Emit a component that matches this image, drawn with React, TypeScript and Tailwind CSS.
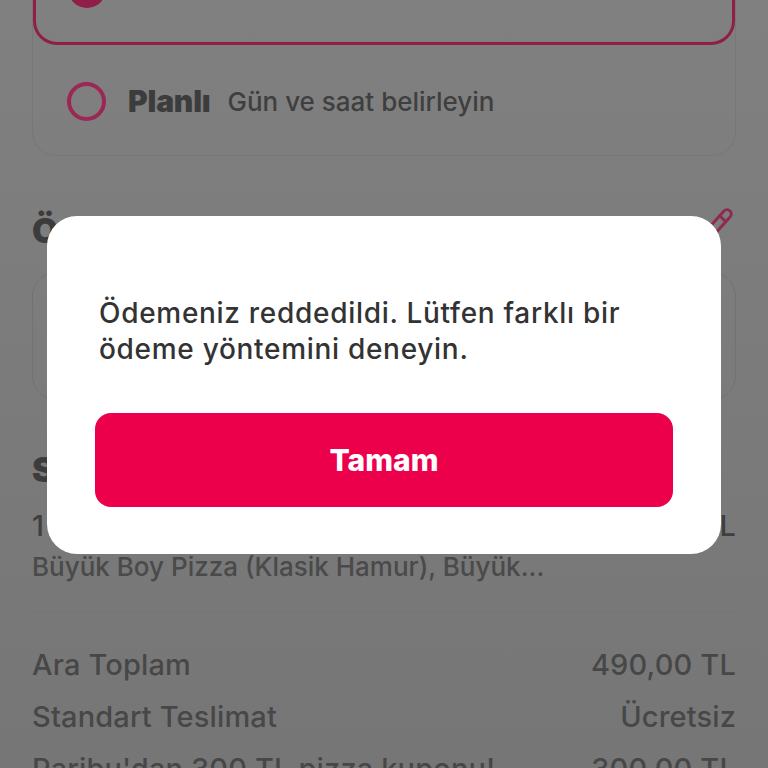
const font = "font-['Inter',sans-serif]";

function Row({ label, value }: { label: string; value: string }) {
  return (
    <div className="flex h-[52px] items-center justify-between text-[29px] font-medium tracking-[0.15px] text-[#474747]">
      <span>{label}</span>
      <span>{value}</span>
    </div>
  );
}

export default function App() {
  return (
    <div className={`relative h-[768px] w-[768px] overflow-hidden bg-gradient-to-b from-[#808080] to-[#767676] ${font}`}>
      <div className="mt-[-60px] px-8">
        <div className="rounded-[24px] border border-[#777777]">
          <div className="relative z-10 flex h-[104px] items-start rounded-[24px] border-[3px] border-[#8f1f49] px-[32px]">
            <div className="mt-[26px] h-[38px] w-[38px] rounded-full bg-[#8f1f49]" />
          </div>
          <div className="flex h-[110px] items-center px-[34px] pt-[2px]">
            <div className="h-[39px] w-[39px] rounded-full border-[4px] border-[#9c2654]" />
            <span className="ml-[22px] text-[30px] font-black tracking-[-0.2px] text-[#3c3c3c]">Planlı</span>
            <span className="ml-[17px] text-[26px] font-medium text-[#3f3f3f]">Gün ve saat belirleyin</span>
          </div>
        </div>

        <div className="mt-[51px] flex h-[46px] items-center justify-between">
          <h2 className="text-[34px] font-black text-[#3c3c3c]">Ödeme Yöntemi</h2>
          <svg className="mr-[3px] mt-[-12px]" width="32" height="32" viewBox="0 0 32 32" fill="none" stroke="#8f2a50" strokeWidth="3" strokeLinejoin="round">
            <path d="M23 3a4 4 0 0 1 6 6L11 29l-8 2 2-8z" />
            <path d="M18 7l7 7" />
          </svg>
        </div>

        <div className="mt-[19px] h-[128px] rounded-[24px] border border-[#727272]" />

        <h2 className="mt-[47px] text-[34px] font-black leading-[46px] text-[#3c3c3c]">Sipariş Özeti</h2>
        <div className="mt-[13px] flex h-[40px] items-center justify-between text-[29px] font-medium text-[#3f3f3f]">
          <span>1 x Büyük Boy Pizza</span>
          <span>490,00 TL</span>
        </div>
        <p className="mt-[1px] h-[40px] text-[26px] leading-[40px] font-medium text-[#4a4a4a]">Büyük Boy Pizza (Klasik Hamur), Büyük...</p>
        <div className="mt-[25px] h-px bg-[#757575]" />
        <div className="mt-[26px]">
          <Row label="Ara Toplam" value="490,00 TL" />
          <Row label="Standart Teslimat" value="Ücretsiz" />
          <Row label="Paribu'dan 300 TL pizza kuponu!" value="300,00 TL" />
        </div>
      </div>

      <div className="absolute inset-0 flex items-start justify-center">
        <div className="mt-[216px] flex h-[338px] w-[674px] flex-col rounded-[30px] bg-white px-[48px] pt-[79px]">
          <p className="px-[4px] text-[28px] leading-[36px] font-medium tracking-[0.7px] text-[#333333]">
            Ödemeniz reddedildi. Lütfen farklı bir ödeme yöntemini deneyin.
          </p>
          <button className="mt-[46px] flex h-[94px] w-full items-center justify-center rounded-[16px] bg-[#ec004b] text-[30px] font-extrabold text-white">
            Tamam
          </button>
        </div>
      </div>
    </div>
  );
}
